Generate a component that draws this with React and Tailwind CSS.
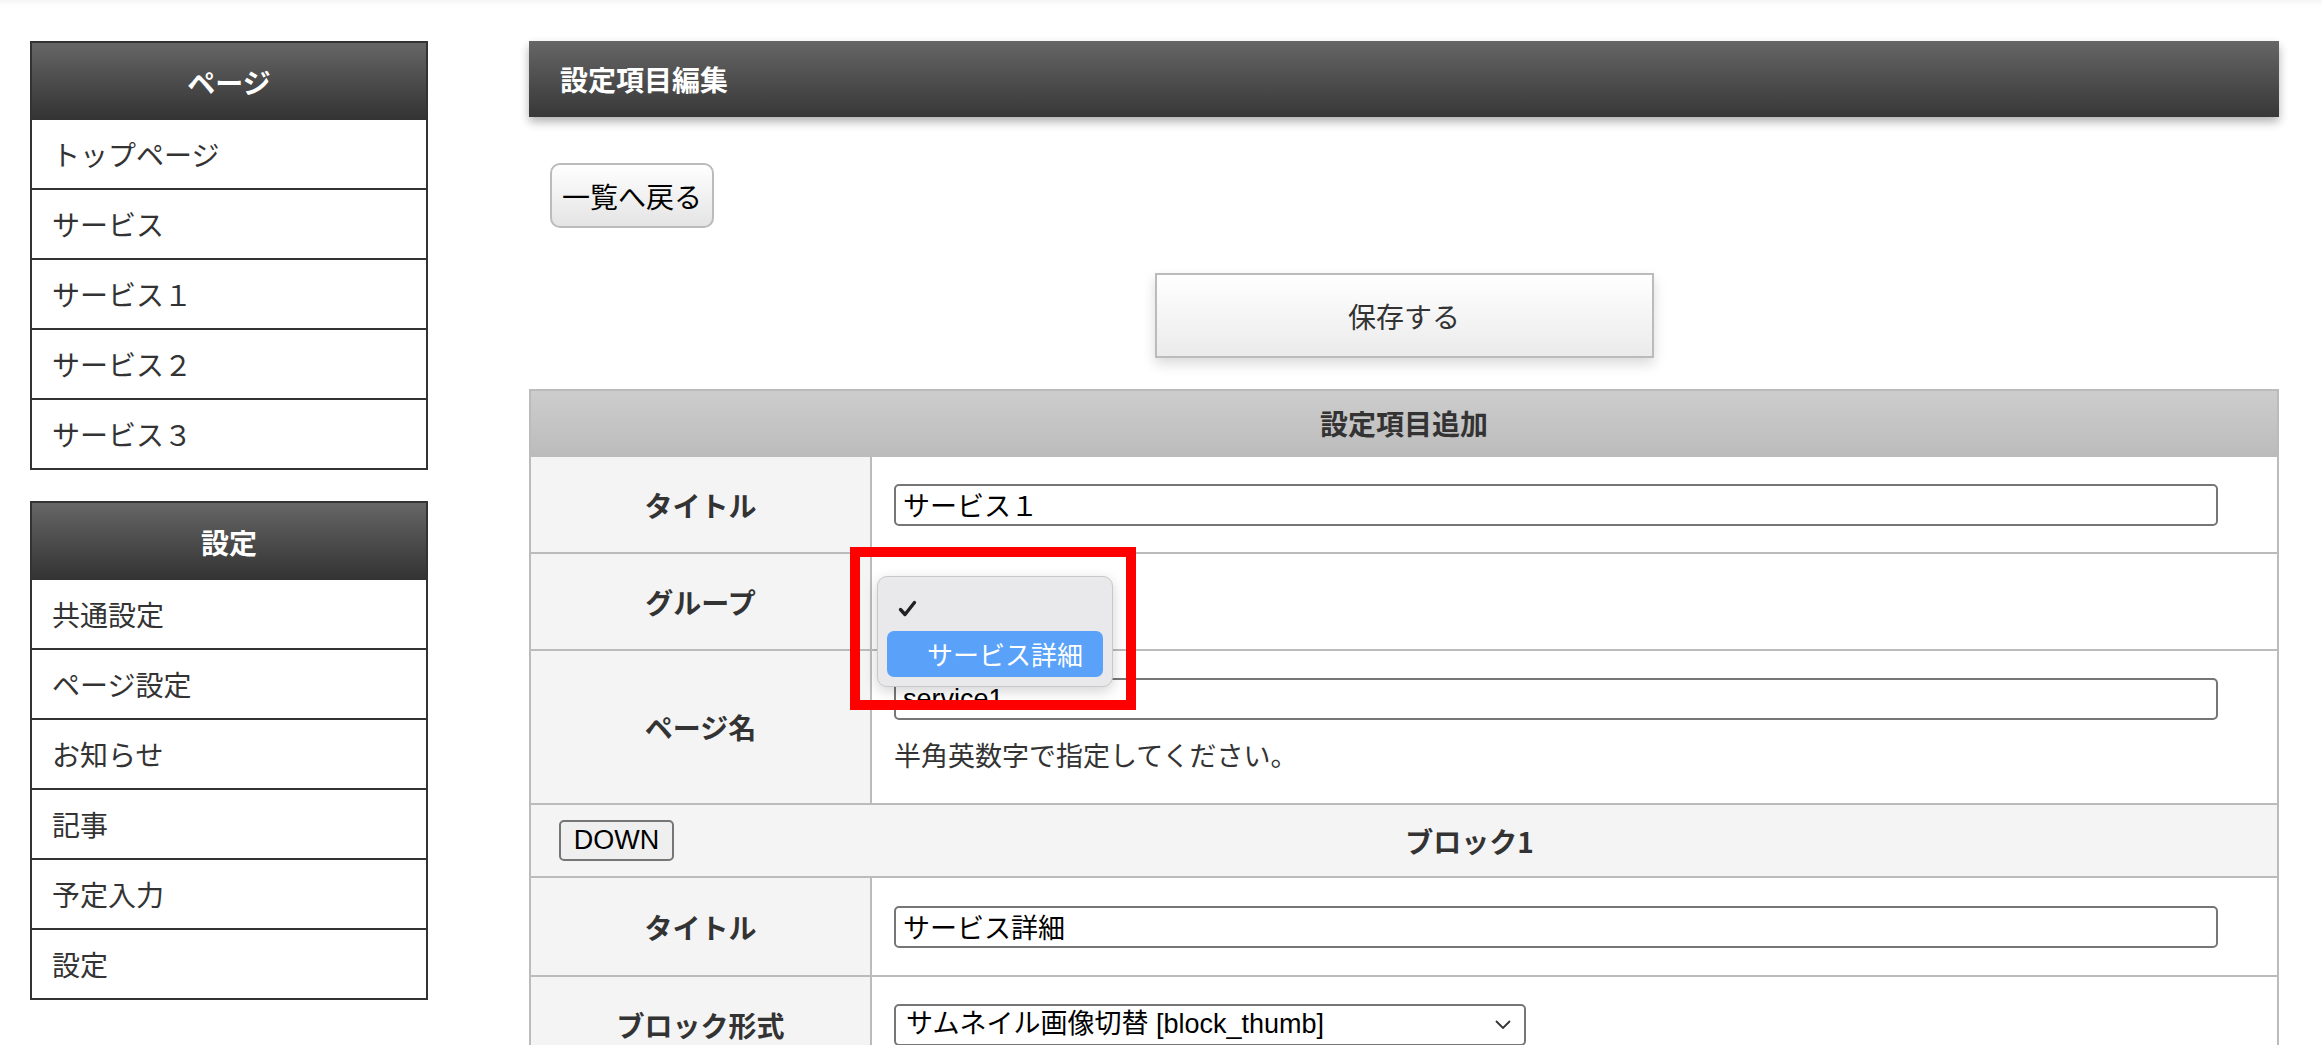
const jp = "font-['Noto_Sans_CJK_JP',sans-serif]";
const ctl = "font-['Liberation_Sans','Noto_Sans_CJK_JP',sans-serif]";

const pages = ["トップページ", "サービス", "サービス１", "サービス２", "サービス３"];
const settings = ["共通設定", "ページ設定", "お知らせ", "記事", "予定入力", "設定"];

function SideBox({ title, items }) {
	return (
		<div className="w-[398px] border-2 border-[#333]">
			<div className="h-[77px] flex items-center justify-center bg-gradient-to-b from-[#666] to-[#333] text-white font-bold text-[28px] leading-none">
				{title}
			</div>
			{items.map((it, i) => (
				<div
					key={it}
					className={
						i < items.length - 1
							? "h-[70px] flex items-center pl-[20px] text-[28px] leading-none text-[#333] border-b-2 border-[#333]"
							: "h-[68px] flex items-center pl-[20px] text-[28px] leading-none text-[#333]"
					}
				>
					{it}
				</div>
			))}
		</div>
	);
}

function Label({ children }) {
	return (
		<div className="flex items-center justify-center bg-[#f4f4f4] font-bold text-[28px] leading-none text-[#333]">
			{children}
		</div>
	);
}

function TextInput({ value }) {
	return (
		<input
			readOnly
			defaultValue={value}
			className={`${ctl} w-[1324px] h-[42px] border-2 border-[#767676] rounded-[5px] bg-white pl-[7px] text-[27px] leading-none text-black outline-none`}
		/>
	);
}

function Row({ label, h, children, cellClass = "flex items-center" }) {
	return (
		<div className={`grid grid-cols-[339px_1fr] border-b-2 border-[#bbb] ${h}`}>
			<Label>{label}</Label>
			<div className={`border-l-2 border-[#bbb] bg-white pl-[22px] ${cellClass}`}>{children}</div>
		</div>
	);
}

export default function App() {
	return (
		<div className={`${jp} h-[1045px] overflow-hidden bg-white`}>
			<div className="h-[6px] bg-gradient-to-b from-[#f5f5f5] to-white" />
			<div className="flex gap-[101px] pl-[30px] pt-[35px]">
				<aside className="flex flex-col gap-[31px]">
					<SideBox title="ページ" items={pages} />
					<SideBox title="設定" items={settings} />
				</aside>

				<main className="w-[1750px]">
					<div className="h-[76px] flex items-center pl-[31px] bg-gradient-to-b from-[#666] to-[#383838] text-white font-bold text-[28px] leading-none shadow-[0_5px_9px_rgba(0,0,0,0.3)]">
						設定項目編集
					</div>

					<div className="pl-[21px] mt-[46px]">
						<button className="h-[65px] px-[10px] border-2 border-[#bbb] rounded-[10px] bg-gradient-to-b from-white to-[#e4e4e4] text-[28px] leading-none text-black">
							一覧へ戻る
						</button>
					</div>

					<div className="flex justify-center mt-[45px]">
						<button className="w-[499px] h-[85px] border-2 border-[#bbb] bg-gradient-to-b from-white to-[#ebebeb] text-[28px] leading-none text-[#333] shadow-[0_6px_12px_rgba(0,0,0,0.15)]">
							保存する
						</button>
					</div>

					<div className="relative mt-[31px] border-2 border-[#bbb]">
						<div className="h-[66px] flex items-center justify-center border-b-2 border-[#bbb] bg-gradient-to-b from-[#cdcdcd] to-[#bcbcbc] font-bold text-[28px] leading-none text-[#333]">
							設定項目追加
						</div>

						<Row label="タイトル" h="h-[97px]">
							<TextInput value="サービス１" />
						</Row>

						<Row label="グループ" h="h-[97px]">
							<div className="h-[42px]" />
						</Row>

						<Row label="ページ名" h="h-[154px]" cellClass="flex flex-col justify-start pt-[27px]">
							<TextInput value="service1" />
							<div className="mt-[15px] text-[27px] leading-[40px] text-[#333]">半角英数字で指定してください。</div>
						</Row>

						<div className="h-[73px] flex items-center pl-[28px] pr-[12px] border-b-2 border-[#bbb] bg-[#f4f4f4]">
							<button className={`${ctl} w-[115px] h-[41px] border-2 border-[#767676] rounded-[5px] bg-[#efefef] text-[27px] leading-none text-black`}>
								DOWN
							</button>
							<div className="flex-1 text-center font-bold text-[28px] leading-none text-[#333]">ブロック1</div>
						</div>

						<Row label="タイトル" h="h-[99px]">
							<TextInput value="サービス詳細" />
						</Row>

						<Row label="ブロック形式" h="h-[97px]">
							<div className={`${ctl} w-[632px] h-[42px] flex items-center justify-between border-2 border-[#767676] rounded-[5px] bg-white pl-[10px] pr-[13px] text-[27px] leading-none text-black`}>
								<span>サムネイル画像切替 [block_thumb]</span>
								<svg width="16" height="9" viewBox="0 0 16 9" fill="none">
									<polyline points="1,1 8,8 15,1" stroke="#333" strokeWidth="1.8" />
								</svg>
							</div>
						</Row>

						{/* native select popup */}
						<div className="absolute left-[346px] top-[185px] w-[236px] h-[111px] rounded-[10px] border border-[#c8c8c8] bg-[#e9e9eb] p-[9px] shadow-[0_4px_14px_rgba(0,0,0,0.18)]">
							<div className="h-[45px] flex items-center pl-[11px]">
								<svg width="19" height="17" viewBox="0 0 19 17" fill="none">
									<path d="M2.5 9.5 L7 14.5 L16.5 2.5" stroke="#222" strokeWidth="3.4" strokeLinecap="round" strokeLinejoin="round" />
								</svg>
							</div>
							<div className="h-[46px] flex items-center pl-[40px] rounded-[7px] bg-[#59a1f9] text-white text-[26px] leading-none">
								サービス詳細
							</div>
						</div>

						{/* highlight annotation */}
						<div className="absolute left-[319px] top-[156px] w-[286px] h-[163px] border-[10px] border-[#ff0000]" />
					</div>
				</main>
			</div>
		</div>
	);
}
